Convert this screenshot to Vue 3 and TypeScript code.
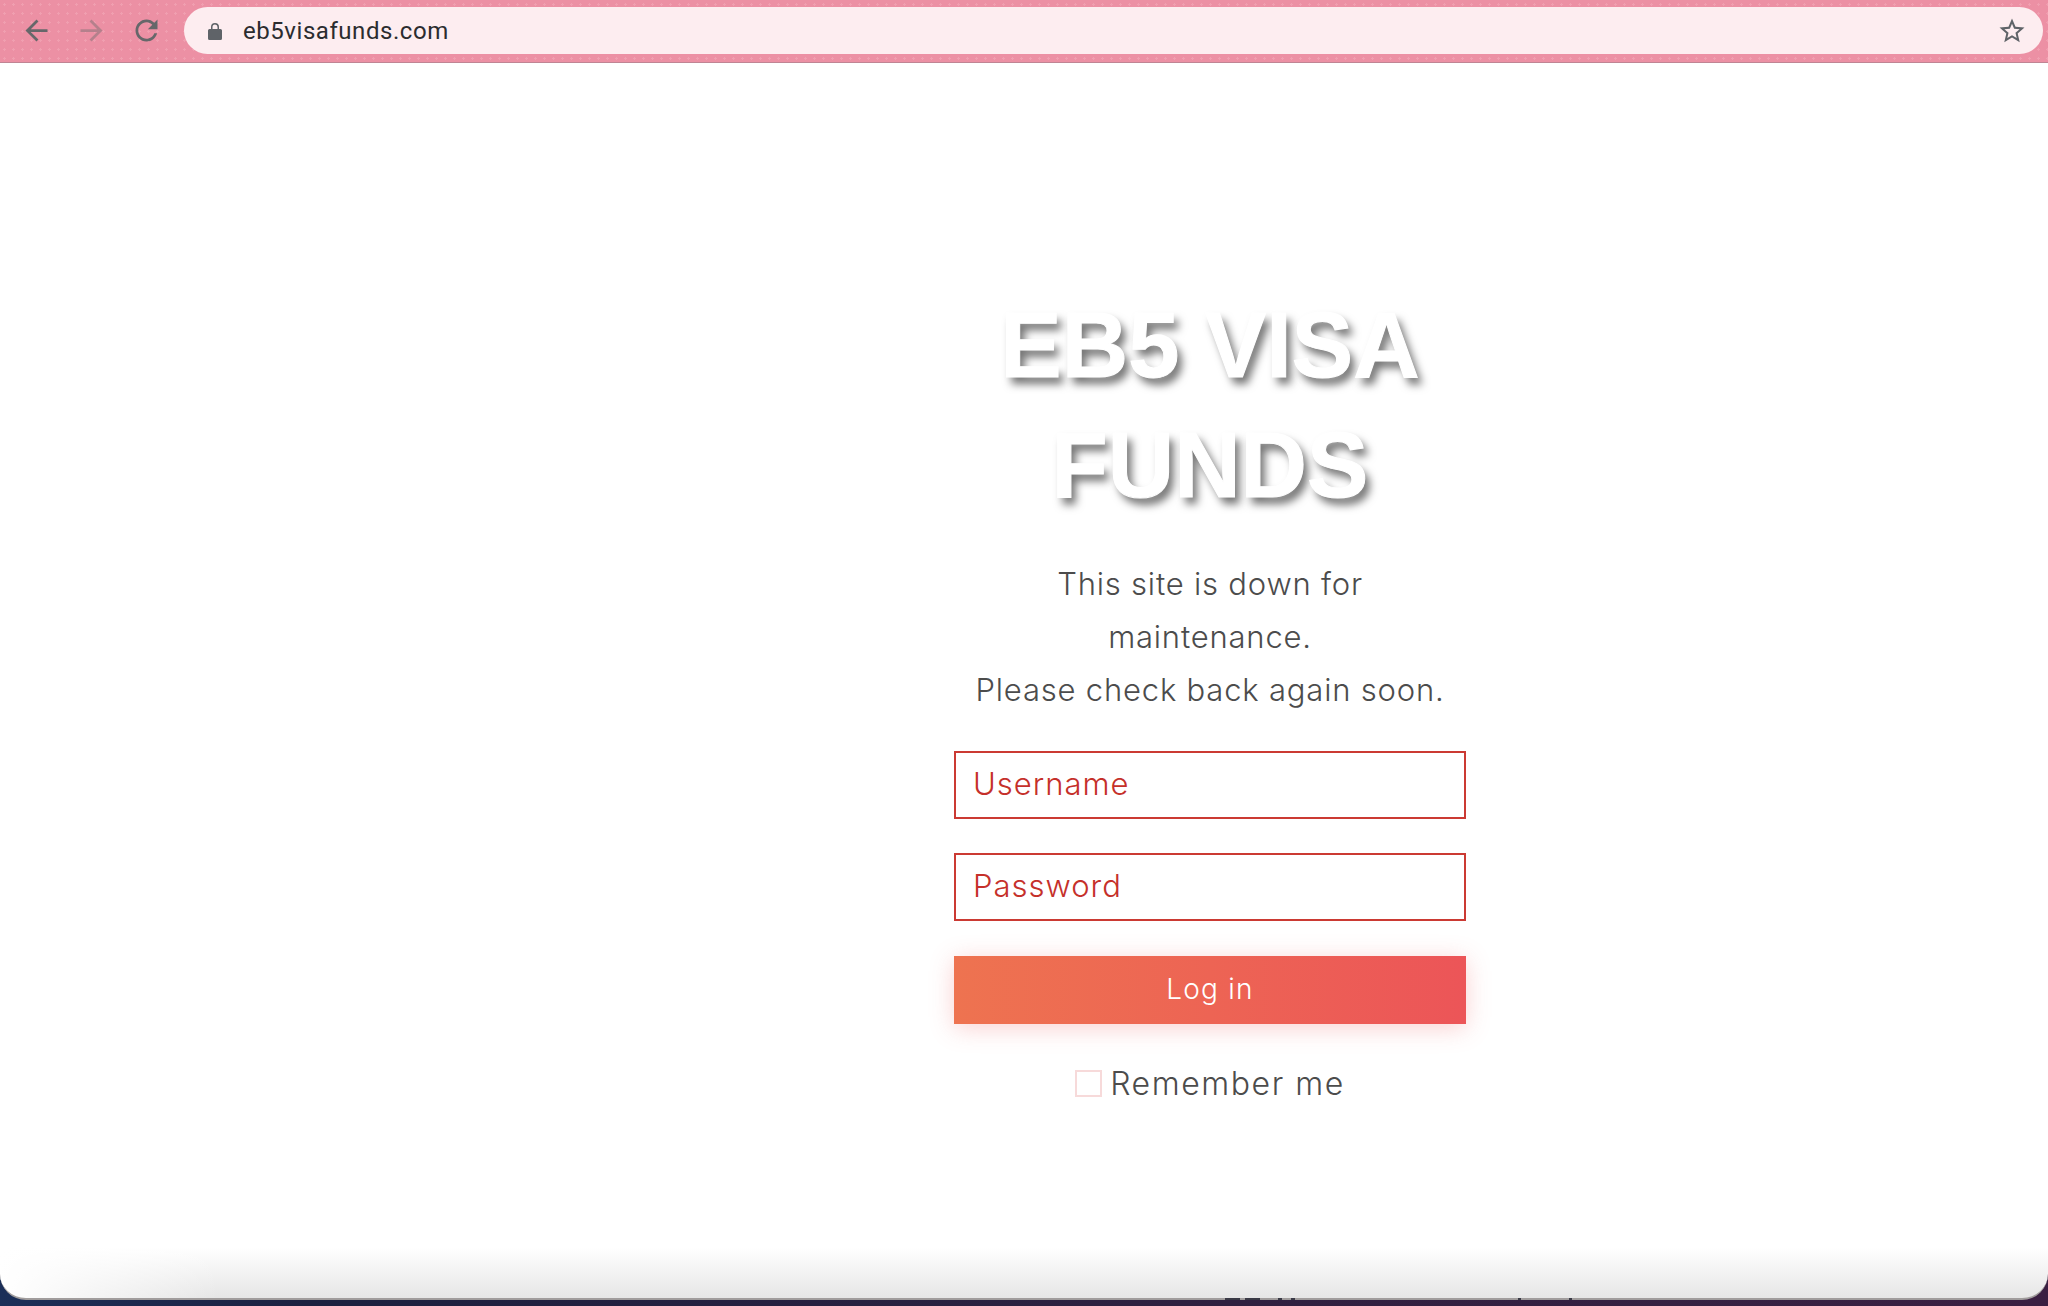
<template>
  <div class="screen">
    <header class="toolbar">
      <button type="button" class="nav-btn" aria-label="Back">
        <svg viewBox="0 0 24 24"><path d="M20 11H7.83l5.59-5.59L12 4l-8 8 8 8 1.41-1.41L7.83 13H20v-2z" /></svg>
      </button>
      <button type="button" class="nav-btn disabled" aria-label="Forward">
        <svg viewBox="0 0 24 24"><path d="M4 11h12.17l-5.59-5.59L12 4l8 8-8 8-1.41-1.41L16.17 13H4v-2z" /></svg>
      </button>
      <button type="button" class="nav-btn" aria-label="Reload">
        <svg viewBox="0 0 24 24"><path d="M17.65 6.35C16.2 4.9 14.21 4 12 4c-4.42 0-7.99 3.58-7.99 8s3.57 8 7.99 8c3.73 0 6.84-2.55 7.73-6h-2.08c-.82 2.33-3.04 4-5.65 4-3.31 0-6-2.69-6-6s2.69-6 6-6c1.66 0 3.14.69 4.22 1.78L13 11h7V4l-2.35 2.35z" /></svg>
      </button>
      <div class="omnibox">
        <svg class="lock" viewBox="0 0 14 18"><path d="M3 7V5a4 4 0 0 1 8 0v2h1.500A1.500 1.500 0 0 1 14 8.500v8a1.500 1.500 0 0 1-1.500 1.500h-11A1.500 1.500 0 0 1 0 16.500v-8A1.500 1.500 0 0 1 1.500 7zm1.500 0h5V5a2.500 2.500 0 0 0-5 0z" /></svg>
        <span class="url">{{ url }}</span>
        <svg class="star" viewBox="0 0 24 24"><path d="M22 9.240l-7.190-.62L12 2 9.190 8.630 2 9.240l5.460 4.730L5.820 21 12 17.270 18.180 21l-1.630-7.030L22 9.240zM12 15.400l-3.760 2.270 1-4.280-3.320-2.880 4.380-.38L12 6.100l1.710 4.040 4.380.38-3.320 2.880 1 4.280L12 15.400z" /></svg>
      </div>
    </header>

    <main class="page">
      <form class="login" @submit.prevent>
        <h1 class="title">EB5 VISA FUNDS</h1>
        <p class="message">This site is down for maintenance.<br />Please check back again soon.</p>
        <input v-model="username" class="field" type="text" placeholder="Username" />
        <input v-model="password" class="field" type="password" placeholder="Password" />
        <button type="submit" class="submit">Log in</button>
        <label class="remember">
          <input v-model="remember" type="checkbox" />
          <span>Remember me</span>
        </label>
      </form>
      <i v-for="m in marks" :key="m.x" class="mark" :style="{ left: m.x + 'px', width: m.w + 'px' }"></i>
    </main>
  </div>
</template>

<script setup lang="ts">
import { ref } from 'vue';

const url = 'eb5visafunds.com';
const username = ref('');
const password = ref('');
const remember = ref(false);

// tops of the window behind, just showing under the page edge
const marks = [
  { x: 1225, w: 15 },
  { x: 1245, w: 15 },
  { x: 1278, w: 4 },
  { x: 1291, w: 4 },
  { x: 1518, w: 3 },
  { x: 1569, w: 3 },
];
</script>

<style>
html, body { margin: 0; background: #fff; }
</style>

<style scoped>
.screen {
  width: 2048px;
  height: 1306px;
  display: flex;
  flex-direction: column;
  overflow: hidden;
  background: linear-gradient(90deg, #1b2f58 0%, #1b2140 15%, #2f2040 60%, #3a1f42 100%);
}

.toolbar {
  flex: 0 0 63px;
  box-sizing: border-box;
  height: 63px;
  display: flex;
  align-items: flex-start;
  padding-top: 7px;
  border-bottom: 1px solid #c08594;
  background-color: #ec90a4;
  background-image: radial-gradient(circle, #f09fb0 1px, transparent 1.400px);
  background-size: 9px 9px;
}

.nav-btn {
  width: 55px;
  height: 47px;
  flex: none;
  padding: 0;
  border: 0;
  background: none;
  display: flex;
  align-items: center;
  justify-content: center;
}
.nav-btn:first-child { margin-left: 9px; }
.nav-btn svg { width: 33px; height: 33px; fill: #66676a; }
.nav-btn.disabled svg { fill: #b5808c; }

.omnibox {
  flex: 1;
  height: 47px;
  margin: 0 5px 0 10px;
  padding: 0 16px 0 24px;
  display: flex;
  align-items: center;
  border-radius: 24px;
  background: #fdedf0;
}
.lock { width: 14px; height: 18px; fill: #5f6368; }
.url {
  flex: 1;
  margin-left: 21px;
  font: 400 24px Roboto, sans-serif;
  letter-spacing: 0.55px;
  color: #2b2c2f;
}
.star { width: 30px; height: 30px; fill: #5f6368; }

.page {
  position: relative;
  flex: 0 0 1237px;
  box-sizing: border-box;
  display: flex;
  justify-content: flex-end;
  padding: 222px 582px 0 0;
  border-bottom: 2px solid #a09c9c;
  border-radius: 0 0 26px 26px;
  background:
    linear-gradient(90deg, #fff 0, rgba(255, 255, 255, 0) 220px),
    linear-gradient(#fff 0, #fff 1185px, #e6e6e6 100%);
}

.login {
  width: 512px;
  display: flex;
  flex-direction: column;
  align-items: stretch;
  text-align: center;
  font-family: Inter, sans-serif;
  font-weight: 300;
}

.title {
  margin: 0;
  padding: 0 40px;
  font: 700 92px/120px "Liberation Sans", Arial, sans-serif;
  color: #fff;
  -webkit-text-stroke: 1px #fff;
  text-shadow: 5px 7px 8px rgba(0, 0, 0, 0.55);
}

.message {
  margin: 32px 0 0;
  padding: 0 10px;
  font-size: 31px;
  line-height: 53px;
  letter-spacing: 0.8px;
  color: #4c4c4c;
}

.field {
  box-sizing: border-box;
  height: 68px;
  margin-top: 34px;
  padding: 0 17px 3px;
  border: 2px solid #cb3a33;
  border-radius: 0;
  outline: none;
  background: #fff;
  font: 300 31px Inter, sans-serif;
  letter-spacing: 1px;
  color: #c5302a;
}
.field::placeholder { color: #c5302a; opacity: 1; }
.message + .field { margin-top: 35px; }

.submit {
  height: 68px;
  margin-top: 35px;
  padding: 0 0 2px;
  border: 0;
  background: linear-gradient(90deg, #ee7350, #ec5558);
  box-shadow: 0 4px 24px rgba(238, 90, 90, 0.28);
  font: 300 28px Inter, sans-serif;
  letter-spacing: 1.2px;
  color: #fff;
}

.remember {
  margin-top: 40px;
  display: flex;
  align-items: center;
  justify-content: center;
  gap: 8px;
  font-size: 32px;
  letter-spacing: 1.55px;
  color: #4c4c4c;
}
.remember input {
  appearance: none;
  box-sizing: border-box;
  width: 27px;
  height: 27px;
  margin: 0;
  border: 2px solid #f7dada;
  background: #fff;
}

.mark {
  position: absolute;
  bottom: -2px;
  height: 2px;
  background: #3a3a46;
}
</style>
